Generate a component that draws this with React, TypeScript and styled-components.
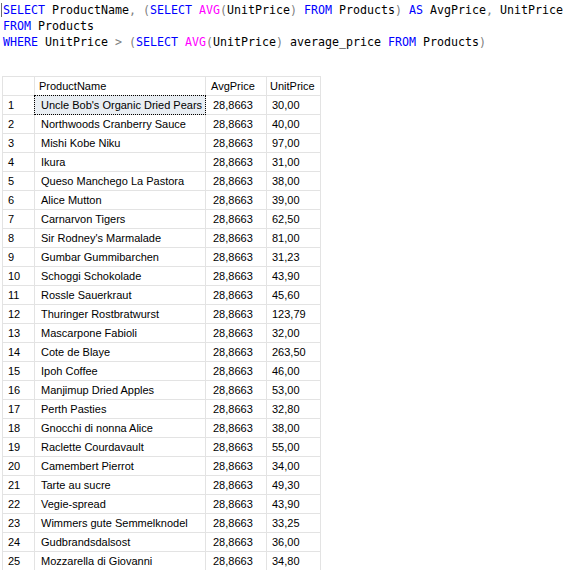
import React from 'react'
import styled, { createGlobalStyle } from 'styled-components'

const GlobalStyle = createGlobalStyle`
    body {
        margin: 0;
        background: #ffffff;
    }
`

type Row = [string, string]

const rows: Row[] = [
    ['Uncle Bob\'s Organic Dried Pears', '30,00'],
    ['Northwoods Cranberry Sauce', '40,00'],
    ['Mishi Kobe Niku', '97,00'],
    ['Ikura', '31,00'],
    ['Queso Manchego La Pastora', '38,00'],
    ['Alice Mutton', '39,00'],
    ['Carnarvon Tigers', '62,50'],
    ['Sir Rodney\'s Marmalade', '81,00'],
    ['Gumbar Gummibarchen', '31,23'],
    ['Schoggi Schokolade', '43,90'],
    ['Rossle Sauerkraut', '45,60'],
    ['Thuringer Rostbratwurst', '123,79'],
    ['Mascarpone Fabioli', '32,00'],
    ['Cote de Blaye', '263,50'],
    ['Ipoh Coffee', '46,00'],
    ['Manjimup Dried Apples', '53,00'],
    ['Perth Pasties', '32,80'],
    ['Gnocchi di nonna Alice', '38,00'],
    ['Raclette Courdavault', '55,00'],
    ['Camembert Pierrot', '34,00'],
    ['Tarte au sucre', '49,30'],
    ['Vegie-spread', '43,90'],
    ['Wimmers gute Semmelknodel', '33,25'],
    ['Gudbrandsdalsost', '36,00'],
    ['Mozzarella di Giovanni', '34,80'],
]

const Page = styled.div`
    display: flex;
    flex-direction: column;
`

const Editor = styled.pre`
    margin: 0;
    padding: 2px 0 0 3px;
    font-family: "DejaVu Sans Mono", "Liberation Mono", monospace;
    font-size: 11.63px;
    line-height: 16px;
    color: #000000;
    position: relative;
`

const Caret = styled.span`
    position: absolute;
    left: 1px;
    top: 3px;
    height: 14px;
    border-left: 1px solid #6d6d6d;
`

const Kw = styled.span<{ $kind: 'kw' | 'fn' | 'op' }>`
    color: ${p => p.$kind === 'kw' ? '#0000ff' : p.$kind === 'fn' ? '#ff00ff' : '#808080'};
`

const Grid = styled.div`
    margin: 26px 0 0 2px;
    width: 318px;
    display: grid;
    grid-template-columns: 31px 170px 60px 53px;
    grid-auto-rows: 18px;
    gap: 1px;
    padding: 1px 0 0 1px;
    background: #e3e3e3;
    font-family: "Liberation Sans", Arial, sans-serif;
    font-size: 11px;
    line-height: 18px;
    color: #000000;
`

const Cell = styled.div<{ $pad: number; $selected?: boolean }>`
    background: ${p => p.$selected ? '#e9eef3' : '#ffffff'};
    padding-left: ${p => p.$pad}px;
    white-space: nowrap;
    overflow: hidden;
    outline: ${p => p.$selected ? '1px dotted #000000' : 'none'};
    position: relative;
`

const App: React.FC = () => {
    return (
        <Page>
            <GlobalStyle />
            <Editor>
                <Caret />
                <Kw $kind="kw">SELECT</Kw> ProductName<Kw $kind="op">,</Kw> <Kw $kind="op">(</Kw><Kw $kind="kw">SELECT</Kw> <Kw $kind="fn">AVG</Kw><Kw $kind="op">(</Kw>UnitPrice<Kw $kind="op">)</Kw> <Kw $kind="kw">FROM</Kw> Products<Kw $kind="op">)</Kw> <Kw $kind="kw">AS</Kw> AvgPrice<Kw $kind="op">,</Kw> UnitPrice{'\n'}
                <Kw $kind="kw">FROM</Kw> Products{'\n'}
                <Kw $kind="kw">WHERE</Kw> UnitPrice <Kw $kind="op">&gt;</Kw> <Kw $kind="op">(</Kw><Kw $kind="kw">SELECT</Kw> <Kw $kind="fn">AVG</Kw><Kw $kind="op">(</Kw>UnitPrice<Kw $kind="op">)</Kw> average_price <Kw $kind="kw">FROM</Kw> Products<Kw $kind="op">)</Kw>
            </Editor>
            <Grid>
                <Cell $pad={5} />
                <Cell $pad={4}>ProductName</Cell>
                <Cell $pad={5}>AvgPrice</Cell>
                <Cell $pad={3}>UnitPrice</Cell>
                {rows.map(([name, price], i) => (
                    <React.Fragment key={i}>
                        <Cell $pad={5}>{i + 1}</Cell>
                        <Cell $pad={6} $selected={i === 0}>{name}</Cell>
                        <Cell $pad={7}>28,8663</Cell>
                        <Cell $pad={5}>{price}</Cell>
                    </React.Fragment>
                ))}
            </Grid>
        </Page>
    )
}

export default App
